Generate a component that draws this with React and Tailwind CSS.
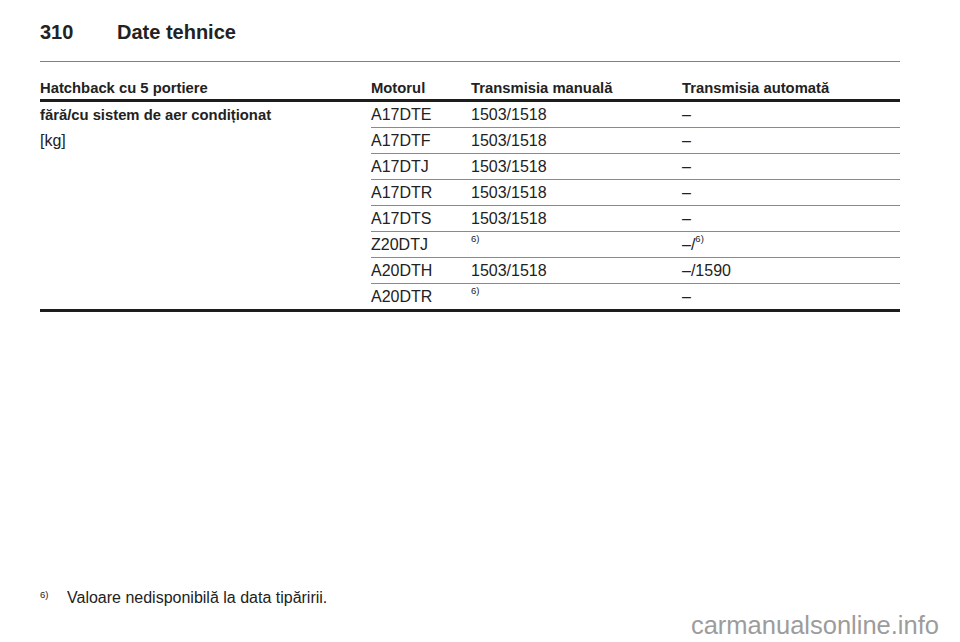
import React from 'react';

const rows = [
    { engine: 'A17DTE', manual: '1503/1518', auto: '–' },
    { engine: 'A17DTF', manual: '1503/1518', auto: '–' },
    { engine: 'A17DTJ', manual: '1503/1518', auto: '–' },
    { engine: 'A17DTR', manual: '1503/1518', auto: '–' },
    { engine: 'A17DTS', manual: '1503/1518', auto: '–' },
    { engine: 'Z20DTJ', manual: null, auto: '–/', autoNote: true },
    { engine: 'A20DTH', manual: '1503/1518', auto: '–/1590' },
    { engine: 'A20DTR', manual: null, auto: '–' },
];

const Note = () => (
    <sup className="relative top-[1px] text-[9.5px] leading-none align-top">6)</sup>
);

const App = () => {
    return (
        <div
            className="relative w-[960px] h-[642px] bg-white text-[#222] overflow-hidden"
            style={{ fontFamily: '"Liberation Sans", Arial, sans-serif' }}
        >
            <div className="pl-[40px] pr-[60px] pt-[20px]">
                {/* page title */}
                <div className="flex text-[20px] leading-[24px] font-bold">
                    <span className="w-[77px]">310</span>
                    <span>Date tehnice</span>
                </div>
                <div className="mt-[17px] h-px bg-[#808080]" />

                {/* table header */}
                <div className="flex pt-[17px] pb-[2px] text-[14.8px] leading-[18px] font-bold border-b-[3px] border-[#1d1d1d]">
                    <div className="w-[331px]">Hatchback cu 5 portiere</div>
                    <div className="w-[100px]">Motorul</div>
                    <div className="w-[211px]">Transmisia manuală</div>
                    <div>Transmisia automată</div>
                </div>

                {/* table body */}
                <div className="flex text-[16px] border-b-[3px] border-[#1d1d1d]">
                    <div className="w-[331px]">
                        <div className="h-[26px] flex items-center font-bold text-[14.8px]">fără/cu sistem de aer condiționat</div>
                        <div className="h-[26px] flex items-center">[kg]</div>
                    </div>
                    <div className="flex-1">
                        {rows.map((r, i) => (
                            <div
                                key={r.engine}
                                className={
                                    i < rows.length - 1
                                        ? 'flex items-center h-[26px] border-b border-[#8a8a8a]'
                                        : 'flex items-center h-[25px]'
                                }
                            >
                                <div className="w-[100px]">{r.engine}</div>
                                <div className="w-[211px]">{r.manual ? r.manual : <Note />}</div>
                                <div>
                                    {r.auto}
                                    {r.autoNote && <Note />}
                                </div>
                            </div>
                        ))}
                    </div>
                </div>

                {/* footnote */}
                <div className="mt-[277px] flex text-[16px] leading-[18px]">
                    <span className="w-[27px]"><Note /></span>
                    <span>Valoare nedisponibilă la data tipăririi.</span>
                </div>
            </div>

            <div className="absolute right-[21px] bottom-[2px] text-[25.5px] leading-[30px] text-[#9c9c9c]">
                carmanualsonline.info
            </div>
        </div>
    );
};

export default App;
